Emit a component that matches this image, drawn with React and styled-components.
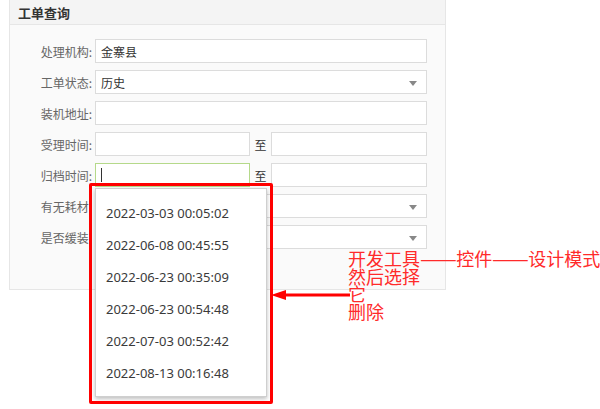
import React from 'react'
import styled, { createGlobalStyle } from 'styled-components'

const GlobalStyle = createGlobalStyle`
  html, body {
    margin: 0;
    padding: 0;
    background: #ffffff;
    font-family: "Noto Sans", "Noto Sans CJK SC", sans-serif;
  }
`

const Page = styled.div`
  position: relative;
  width: 600px;
  height: 409px;
  overflow: hidden;
`

const Panel = styled.div`
  margin-left: 9px;
  width: 437px;
  height: 290px;
  box-sizing: border-box;
  border: 1px solid #e6e6e6;
  border-top: none;
  background: #fafafa;
`

const PanelHeader = styled.div`
  height: 25px;
  box-sizing: border-box;
  background: #f4f4f4;
  border-bottom: 1px solid #e6e6e6;
  padding-left: 8px;
  display: flex;
  align-items: center;
  font-family: "Noto Sans CJK SC", sans-serif;
  font-size: 13px;
  font-weight: bold;
  color: #333;
`

const Form = styled.div`
  display: flex;
  flex-direction: column;
  gap: 7px;
  padding-top: 14px;
`

const Row = styled.div`
  display: flex;
  align-items: center;
  height: 24px;
`

const Label = styled.div`
  width: 82px;
  margin-right: 3px;
  text-align: right;
  font-family: "Noto Sans CJK SC", sans-serif;
  font-size: 12px;
  color: #666;
  white-space: nowrap;
`

const Field = styled.div`
  position: relative;
  box-sizing: border-box;
  width: ${({ w }) => w}px;
  height: 24px;
  background: #fff;
  border: 1px solid ${({ focus }) => (focus ? '#b5d98a' : '#dcdcdc')};
  display: flex;
  align-items: center;
  padding-left: 5px;
  font-family: "Noto Sans CJK SC", sans-serif;
  font-size: 12px;
  color: #333;
`

const Caret = styled.span`
  position: absolute;
  right: 9px;
  top: 10px;
  width: 0;
  height: 0;
  border-left: 4px solid transparent;
  border-right: 4px solid transparent;
  border-top: 5px solid #888;
`

const Cursor = styled.span`
  width: 1px;
  height: 14px;
  background: #333;
`

const To = styled.span`
  width: 21px;
  text-align: center;
  font-family: "Noto Sans CJK SC", sans-serif;
  font-size: 12px;
  color: #333;
`

const Dropdown = styled.div`
  position: absolute;
  left: 95px;
  top: 188px;
  width: 172px;
  height: 209px;
  box-sizing: border-box;
  background: #fff;
  border: 1px solid #cfcfcf;
  box-shadow: 0 2px 4px rgba(0, 0, 0, 0.25);
  padding-top: 8px;
  display: flex;
  flex-direction: column;
`

const Option = styled.div`
  height: 32px;
  line-height: 32px;
  padding-left: 10px;
  font-family: "Noto Sans", sans-serif;
  font-size: 13px;
  color: #3a3a3a;
`

const RedBox = styled.div`
  position: absolute;
  left: 89px;
  top: 183px;
  width: 184px;
  height: 221px;
  box-sizing: border-box;
  border: 3px solid #ff0000;
  border-radius: 2px;
`

const Arrow = styled.svg`
  position: absolute;
  left: 268px;
  top: 288px;
`

const Note = styled.div`
  position: absolute;
  left: 348px;
  top: 250px;
  font-family: "Noto Sans CJK SC", sans-serif;
  font-size: 18px;
  line-height: 17.7px;
  color: #ff2a2a;
  white-space: nowrap;
`

const Dash = styled.span`
  display: inline-block;
  transform: scaleX(1.22);
  transform-origin: left center;
  margin-right: 6px;
`

const options = [
  '2022-03-03 00:05:02',
  '2022-06-08 00:45:55',
  '2022-06-23 00:35:09',
  '2022-06-23 00:54:48',
  '2022-07-03 00:52:42',
  '2022-08-13 00:16:48',
]

export default function App() {
  return (
    <Page>
      <GlobalStyle />
      <Panel>
        <PanelHeader>工单查询</PanelHeader>
        <Form>
          <Row>
            <Label>处理机构:</Label>
            <Field w={332}>金寨县</Field>
          </Row>
          <Row>
            <Label>工单状态:</Label>
            <Field w={332}>
              历史
              <Caret />
            </Field>
          </Row>
          <Row>
            <Label>装机地址:</Label>
            <Field w={332} />
          </Row>
          <Row>
            <Label>受理时间:</Label>
            <Field w={155} />
            <To>至</To>
            <Field w={156} />
          </Row>
          <Row>
            <Label>归档时间:</Label>
            <Field w={155} focus>
              <Cursor />
            </Field>
            <To>至</To>
            <Field w={156} />
          </Row>
          <Row>
            <Label>有无耗材:</Label>
            <Field w={332}>
              <Caret />
            </Field>
          </Row>
          <Row>
            <Label>是否缓装:</Label>
            <Field w={332}>
              <Caret />
            </Field>
          </Row>
        </Form>
      </Panel>

      <Dropdown>
        {options.map((o, i) => (
          <Option key={i}>{o}</Option>
        ))}
      </Dropdown>
      <RedBox />

      <Arrow width="84" height="14" viewBox="0 0 84 14">
        <line x1="14" y1="7" x2="82" y2="7" stroke="#ff0000" strokeWidth="3" />
        <polygon points="3,7 18,2 18,12" fill="#ff0000" />
      </Arrow>

      <Note>
        开发工具<Dash>——</Dash>控件<Dash>——</Dash>设计模式
        <br />
        然后选择
        <br />
        它
        <br />
        删除
      </Note>
    </Page>
  )
}
